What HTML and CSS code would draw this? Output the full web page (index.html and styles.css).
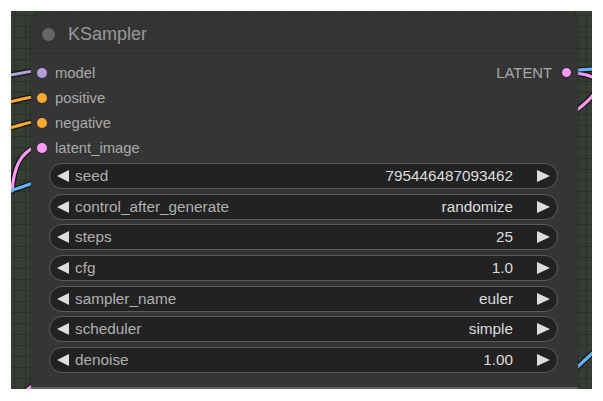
FILE: index.html
```html
<!DOCTYPE html>
<html>
<head>
<meta charset="utf-8">
<link rel="stylesheet" href="styles.css">
</head>
<body>
<div class="canvas">
  <svg class="wires" width="581" height="378" viewBox="0 0 581 378">
    <g class="outline">
      <path d="M-2 64 C8 63 14 61 22 60"/>
      <path d="M-2 91 C8 89 14 87 22 86"/>
      <path d="M-2 117 C8 115 14 112 22 111"/>
      <path d="M24 136 C10 142 3 155 1 180"/>
      <path d="M-2 180 C6 178 14 175 22 172"/>
      <path d="M555 60 C565 59 575 58 590 58"/>
      <path d="M555 62 C600 62 592 80 562 102"/>
      <path d="M560 362 L588 336"/>
      <path d="M12 382 L22 374"/>
    </g>
    <path class="w lav" d="M-2 64 C8 63 14 61 22 60"/>
    <path class="w org" d="M-2 91 C8 89 14 87 22 86"/>
    <path class="w org" d="M-2 117 C8 115 14 112 22 111"/>
    <path class="w pink" d="M24 136 C10 142 3 155 1 180"/>
    <path class="w blue" d="M-2 180 C6 178 14 175 22 172"/>
    <path class="w blue" d="M555 60 C565 59 575 58 590 58"/>
    <path class="w pink" d="M555 62 C600 62 592 80 562 102"/>
    <path class="w blue" d="M560 362 L588 336"/>
    <path class="w pink" d="M12 382 L22 374"/>
  </svg>
  <div class="node">
    <div class="title">
      <span class="title-dot"></span>
      <span class="title-text">KSampler</span>
    </div>
    <div class="body">
      <div class="slots">
        <div class="slot-row">
          <div class="slot"><span class="dot lav-bg"></span><span class="slot-label">model</span></div>
          <div class="slot out"><span class="slot-label">LATENT</span><span class="dot pink-bg outlined"></span></div>
        </div>
        <div class="slot-row">
          <div class="slot"><span class="dot org-bg"></span><span class="slot-label">positive</span></div>
        </div>
        <div class="slot-row">
          <div class="slot"><span class="dot org-bg"></span><span class="slot-label">negative</span></div>
        </div>
        <div class="slot-row">
          <div class="slot"><span class="dot pink-bg"></span><span class="slot-label">latent_image</span></div>
        </div>
      </div>
      <div class="widgets">
        <div class="widget"><svg class="arrow" width="12" height="12" viewBox="0 0 12 12"><path d="M0 6 L12 0 L12 12Z"/></svg><span class="w-label">seed</span><span class="w-value">795446487093462</span><svg class="arrow r" width="13" height="12" viewBox="0 0 13 12"><path d="M0 0 L13 6 L0 12Z"/></svg></div>
        <div class="widget"><svg class="arrow" width="12" height="12" viewBox="0 0 12 12"><path d="M0 6 L12 0 L12 12Z"/></svg><span class="w-label">control_after_generate</span><span class="w-value">randomize</span><svg class="arrow r" width="13" height="12" viewBox="0 0 13 12"><path d="M0 0 L13 6 L0 12Z"/></svg></div>
        <div class="widget"><svg class="arrow" width="12" height="12" viewBox="0 0 12 12"><path d="M0 6 L12 0 L12 12Z"/></svg><span class="w-label">steps</span><span class="w-value">25</span><svg class="arrow r" width="13" height="12" viewBox="0 0 13 12"><path d="M0 0 L13 6 L0 12Z"/></svg></div>
        <div class="widget"><svg class="arrow" width="12" height="12" viewBox="0 0 12 12"><path d="M0 6 L12 0 L12 12Z"/></svg><span class="w-label">cfg</span><span class="w-value">1.0</span><svg class="arrow r" width="13" height="12" viewBox="0 0 13 12"><path d="M0 0 L13 6 L0 12Z"/></svg></div>
        <div class="widget"><svg class="arrow" width="12" height="12" viewBox="0 0 12 12"><path d="M0 6 L12 0 L12 12Z"/></svg><span class="w-label">sampler_name</span><span class="w-value">euler</span><svg class="arrow r" width="13" height="12" viewBox="0 0 13 12"><path d="M0 0 L13 6 L0 12Z"/></svg></div>
        <div class="widget"><svg class="arrow" width="12" height="12" viewBox="0 0 12 12"><path d="M0 6 L12 0 L12 12Z"/></svg><span class="w-label">scheduler</span><span class="w-value">simple</span><svg class="arrow r" width="13" height="12" viewBox="0 0 13 12"><path d="M0 0 L13 6 L0 12Z"/></svg></div>
        <div class="widget"><svg class="arrow" width="12" height="12" viewBox="0 0 12 12"><path d="M0 6 L12 0 L12 12Z"/></svg><span class="w-label">denoise</span><span class="w-value">1.00</span><svg class="arrow r" width="13" height="12" viewBox="0 0 13 12"><path d="M0 0 L13 6 L0 12Z"/></svg></div>
      </div>
    </div>
  </div>
</div>
</body>
</html>
```

FILE: styles.css
```css
html, body {
  margin: 0;
  padding: 0;
  background: #ffffff;
}
body {
  font-family: "Liberation Sans", Arial, sans-serif;
}
.canvas {
  position: relative;
  margin: 11px;
  width: 581px;
  height: 378px;
  overflow: hidden;
  background-color: #363d34;
  background-image:
    linear-gradient(to right, rgba(0,0,0,0.18) 1px, transparent 1px),
    linear-gradient(to bottom, rgba(0,0,0,0.18) 1px, transparent 1px);
  background-size: 11px 11px;
  background-position: 3px 4px;
}
.wires {
  position: absolute;
  left: 0;
  top: 0;
  z-index: 0;
}
.outline path {
  fill: none;
  stroke: #111;
  stroke-width: 5.5;
  stroke-linecap: round;
}
.w {
  fill: none;
  stroke-width: 3.2;
  stroke-linecap: round;
}
.lav { stroke: #b39ddb; }
.org { stroke: #ffa931; }
.pink { stroke: #ff9cf9; }
.blue { stroke: #64b5f6; }

.node {
  position: absolute;
  z-index: 1;
  left: 20px;
  top: 3px;
  width: 547px;
  height: 375px;
  box-sizing: border-box;
  background: #353535;
  border-radius: 9px 9px 0 0;
  border-bottom: 2px solid #645c60;
  box-shadow: 0 0 3px rgba(0,0,0,0.35);
  display: flex;
  flex-direction: column;
}
.title {
  height: 39px;
  display: flex;
  align-items: center;
  padding-left: 11px;
  gap: 13px;
  border-bottom: 1px solid #2a2a2a;
  background: #343434;
  border-radius: 9px 9px 0 0;
}
.title-dot {
  width: 13px;
  height: 13px;
  border-radius: 50%;
  background: #666;
  margin-top: 1px;
}
.title-text {
  font-size: 18px;
  color: #999;
  margin-top: 1px;
}
.body {
  padding-top: 6px;
  display: flex;
  flex-direction: column;
}
.slots {
  display: flex;
  flex-direction: column;
}
.slot-row {
  height: 25px;
  display: flex;
  align-items: center;
  justify-content: space-between;
}
.slot {
  display: flex;
  align-items: center;
  gap: 8px;
  padding-left: 6px;
}
.slot.out {
  padding-left: 0;
  padding-right: 6px;
  gap: 9px;
}
.dot {
  width: 10px;
  height: 10px;
  border-radius: 50%;
  box-sizing: border-box;
}
.dot.outlined {
  border: 1.5px solid #151515;
  width: 11px;
  height: 11px;
}
.lav-bg { background: #b39ddb; }
.org-bg { background: #ffa931; }
.pink-bg { background: #ff9cf9; }
.slot-label {
  font-size: 14.8px;
  color: #aaaaaa;
}
.widgets {
  margin-top: 3px;
  padding: 0 20px 0 18px;
  display: flex;
  flex-direction: column;
  gap: 4.7px;
}
.widget {
  height: 26px;
  box-sizing: border-box;
  border: 1px solid #5b5b5b;
  border-radius: 13px;
  background: #222222;
  display: flex;
  align-items: center;
  padding: 0 7px;
  font-size: 15.3px;
}
.arrow {
  fill: #dddddd;
  flex: none;
}
.arrow.r {
  margin-left: 24px;
}
.w-label {
  margin-left: 6px;
  color: #b0b0b0;
  flex: 1;
}
.w-value {
  color: #dddddd;
}
```
